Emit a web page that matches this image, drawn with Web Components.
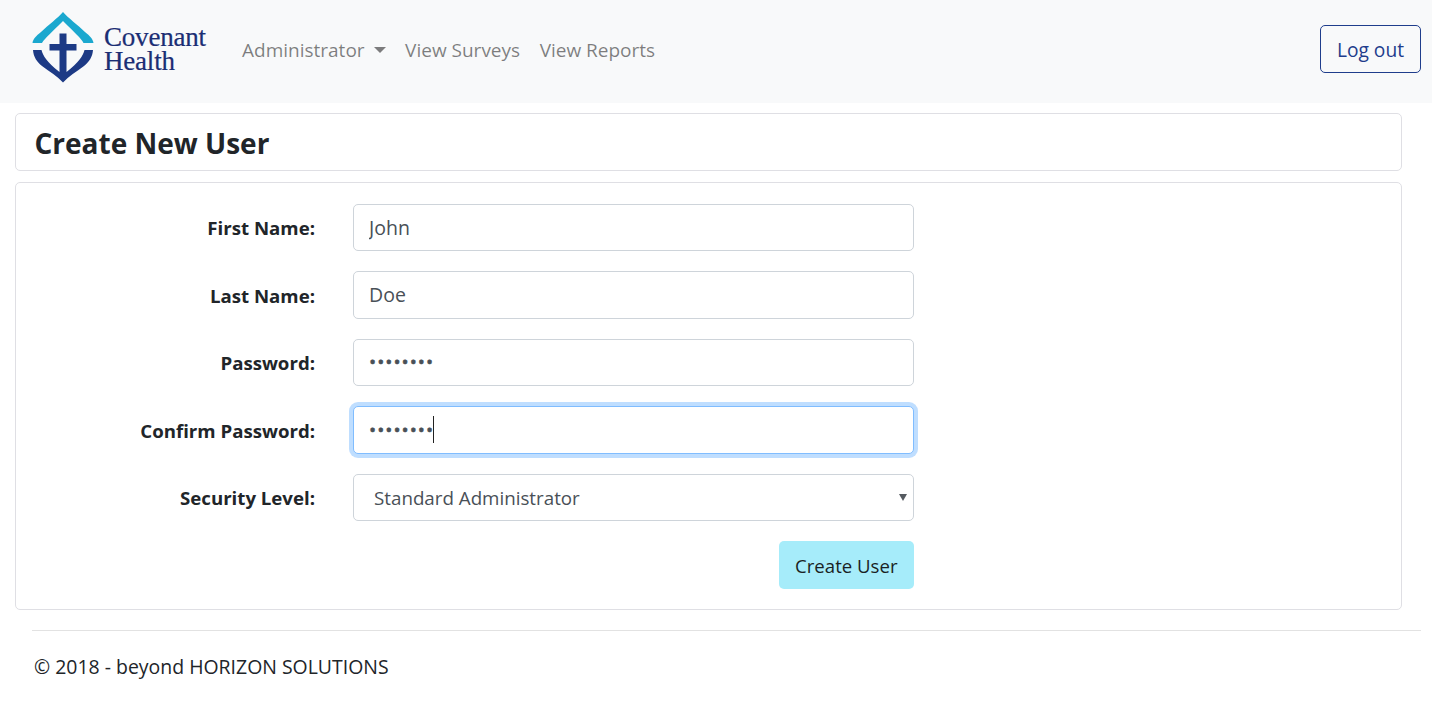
<!DOCTYPE html>
<html lang="en">
<head>
<meta charset="utf-8">
<title>Create New User</title>
<style>
  html, body { margin: 0; padding: 0; background: #fff; }
  body { font-family: "Open Sans", "Noto Sans", sans-serif; font-size: 19px; color: #212529; overflow: hidden; }
</style>
</head>
<body>
<app-navbar>
  <nav-link caret>Administrator</nav-link>
  <nav-link>View Surveys</nav-link>
  <nav-link>View Reports</nav-link>
</app-navbar>

<page-card heading>Create New User</page-card>
<page-card>
  <user-form>
    <form-row label="First Name:"><text-field value="John"></text-field></form-row>
    <form-row label="Last Name:"><text-field value="Doe"></text-field></form-row>
    <form-row label="Password:"><text-field type="password" value="password"></text-field></form-row>
    <form-row label="Confirm Password:"><text-field type="password" value="password" focused></text-field></form-row>
    <form-row label="Security Level:"><select-field value="Standard Administrator"></select-field></form-row>
    <form-row><create-button>Create User</create-button></form-row>
  </user-form>
</page-card>
<page-footer>© 2018 - beyond HORIZON SOLUTIONS</page-footer>

<script>
class AppNavbar extends HTMLElement {
  constructor() {
    super();
    this.attachShadow({mode: 'open'}).innerHTML = `
      <style>
        :host { display: flex; align-items: center; height: 103px; background: #f8f9fa; padding: 0 11px 5px 32px; box-sizing: border-box; }
        .logo { display: flex; align-items: center; width: 210px; height: 98px; flex: none; }
        .logo svg { display: block; width: 62px; height: 72px; margin-top: -4px; flex: none; filter: blur(.3px); }
        .name { font-family: "Liberation Serif", serif; font-size: 27px; line-height: 24px; color: #1b2e74; margin: 0 0 0 10px; letter-spacing: -.2px; -webkit-text-stroke: .2px #1b2e74; }
        .links { display: flex; flex: 1; padding-top: 2px; }
        .logout { display: block; height: 48px; box-sizing: border-box; padding: 0 16px; line-height: 48px; font-size: 19.2px; border: 1px solid #1f3d8c; border-radius: 5px; color: #1f3d8c; }
      </style>
      <div class="logo">
        <svg viewBox="32 11 62 72" aria-hidden="true">
          <path fill="#1ba8cf" d="M63 12 C68 18 78 25 85 32 C90 36 93 39 93.5 43 H83.5 C81 38 75 33 63 21 C51 33 45 38 42 43 H32.5 C33 39 36 36 41 32 C48 25 58 18 63 12Z"/>
          <path fill="#1d3a85" d="M33 50 H41.5 C43 56 47 62 59.5 72 V33.5 H66.5 V72 C79 62 83 56 84.5 50 H93 C92.5 57 89 62 84 66 C76 72 69 76 63 82.5 C57 76 50 72 42 66 C37 62 33.5 57 33 50Z"/>
          <rect fill="#1d3a85" x="49.5" y="44" width="27" height="6.5"/>
        </svg>
        <div class="name">Covenant<br>Health</div>
      </div>
      <div class="links"><slot></slot></div>
      <a class="logout">Log out</a>`;
  }
}

class NavLink extends HTMLElement {
  constructor() {
    super();
    this.attachShadow({mode: 'open'}).innerHTML = `
      <style>
        :host { display: flex; align-items: center; color: rgba(0,0,0,.5); margin-right: 19.5px; line-height: 30px; }
        .caret { display: none; width: 0; height: 0; margin-left: 9px; border-top: 6px solid rgba(0,0,0,.5); border-left: 6px solid transparent; border-right: 6px solid transparent; }
        :host([caret]) .caret { display: block; }
      </style>
      <slot></slot><span class="caret"></span>`;
  }
}

class PageCard extends HTMLElement {
  constructor() {
    super();
    this.attachShadow({mode: 'open'}).innerHTML = `
      <style>
        :host { display: block; width: 1387px; box-sizing: border-box; margin: 11px 0 0 15px; border: 1px solid #dfdfe4; border-radius: 5px; background: #fff; }
        :host([heading]) { height: 58px; margin-top: 10px; padding: 0 18.5px; font-size: 28px; font-weight: 700; line-height: 58px; }
      </style>
      <slot></slot>`;
  }
}

class UserForm extends HTMLElement {
  constructor() {
    super();
    this.attachShadow({mode: 'open'}).innerHTML = `
      <style>
        :host { display: flex; flex-direction: column; gap: 20px; padding: 20.5px 0 20px; }
      </style>
      <slot></slot>`;
  }
}

class FormRow extends HTMLElement {
  constructor() {
    super();
    this.attachShadow({mode: 'open'}).innerHTML = `
      <style>
        :host { display: grid; grid-template-columns: 299px 561px; column-gap: 38px; align-items: center; min-height: 47.5px; }
        .label { font-weight: 700; font-size: 18.65px; text-align: right; padding-top: 1px; }
        .field { display: flex; flex-direction: column; }
      </style>
      <div class="label"></div>
      <div class="field"><slot></slot></div>`;
    this.shadowRoot.querySelector('.label').textContent = this.getAttribute('label') || '';
  }
}

class TextField extends HTMLElement {
  constructor() {
    super();
    this.attachShadow({mode: 'open'}).innerHTML = `
      <style>
        :host { display: block; position: relative; }
        input { display: block; width: 100%; height: 47.5px; box-sizing: border-box; padding: 0 15px; margin: 0; border: 1px solid #ced4da; border-radius: 5px; outline: 0; background: #fff; color: #495057; font: inherit; font-size: 19.5px; }
        input[type=password] { font-size: 19px; letter-spacing: 1px; -webkit-text-stroke: .5px #495057; }
        :host([focused]) input { border-color: #80bdff; box-shadow: 0 0 0 4px rgba(0,123,255,.25); }
        .cursor { display: none; position: absolute; left: 80px; top: 10px; width: 1px; height: 27px; background: #222; }
        :host([focused]) .cursor { display: block; }
      </style>
      <input><span class="cursor"></span>`;
    const input = this.shadowRoot.querySelector('input');
    input.type = this.getAttribute('type') || 'text';
    input.value = this.getAttribute('value') || '';
  }
}

class SelectField extends HTMLElement {
  constructor() {
    super();
    this.attachShadow({mode: 'open'}).innerHTML = `
      <style>
        :host { display: block; position: relative; }
        select { display: block; width: 100%; height: 47.5px; box-sizing: border-box; padding: 0 20px; margin: 0; border: 1px solid #ced4da; border-radius: 5px; outline: 0; background: #fff; color: #495057; font: inherit; font-size: 18.75px; appearance: none; -webkit-appearance: none; }
        .arrow { position: absolute; right: 7px; top: 20px; width: 0; height: 0; border-top: 7px solid #555a60; border-left: 4px solid transparent; border-right: 4px solid transparent; }
      </style>
      <select></select><span class="arrow"></span>`;
    const opt = document.createElement('option');
    opt.textContent = this.getAttribute('value');
    this.shadowRoot.querySelector('select').appendChild(opt);
  }
}

class CreateButton extends HTMLElement {
  constructor() {
    super();
    this.attachShadow({mode: 'open'}).innerHTML = `
      <style>
        :host { display: block; align-self: flex-end; height: 47.5px; box-sizing: border-box; padding: 0 16.5px; line-height: 50px; font-size: 18.6px; background: #a6ecfa; border-radius: 5px; color: #1a1f24; }
      </style>
      <slot></slot>`;
  }
}

class PageFooter extends HTMLElement {
  constructor() {
    super();
    this.attachShadow({mode: 'open'}).innerHTML = `
      <style>
        :host { display: block; margin: 20.5px 11px 0 32px; padding: 21px 2px 0; border-top: 1px solid #e2e2e2; line-height: 30px; font-size: 19.45px; }
      </style>
      <slot></slot>`;
  }
}

customElements.define('app-navbar', AppNavbar);
customElements.define('nav-link', NavLink);
customElements.define('page-card', PageCard);
customElements.define('user-form', UserForm);
customElements.define('form-row', FormRow);
customElements.define('text-field', TextField);
customElements.define('select-field', SelectField);
customElements.define('create-button', CreateButton);
customElements.define('page-footer', PageFooter);
</script>
</body>
</html>
